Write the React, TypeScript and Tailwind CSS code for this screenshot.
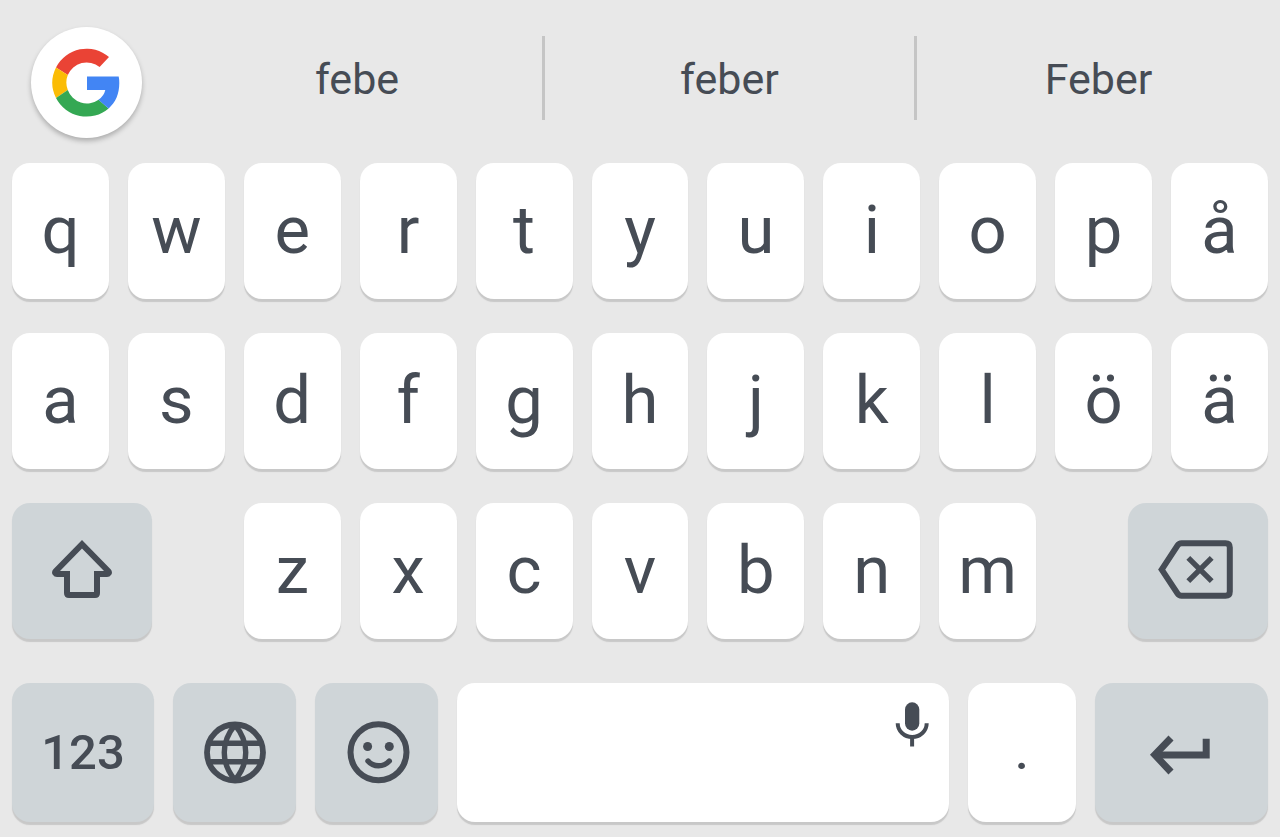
import type { ReactNode } from "react";

const topRow = ["q", "w", "e", "r", "t", "y", "u", "i", "o", "p", "å"];
const homeRow = ["a", "s", "d", "f", "g", "h", "j", "k", "l", "ö", "ä"];
const bottomRow = ["z", "x", "c", "v", "b", "n", "m"];

const keyBase =
  "flex min-w-0 items-center justify-center rounded-[18px] shadow-[0_3px_1px_#c8c8c8] ";
const lightKey = keyBase + "bg-white";
const darkKey = keyBase + "bg-[#cfd5d8]";

function LetterKey({ letter }: { letter: string }) {
  return (
    <button type="button" className={lightKey + " h-[136px] pb-0.5 text-[67px] leading-none"}>
      {letter}
    </button>
  );
}

function ActionKey({
  label,
  className,
  children,
}: {
  label: string;
  className: string;
  children: ReactNode;
}) {
  return (
    <button type="button" aria-label={label} className={darkKey + " " + className}>
      {children}
    </button>
  );
}

function GoogleLogo() {
  return (
    <svg viewBox="52 47.5 70 70" className="h-[70px] w-[70px]" aria-hidden="true">
      <path fill="#ea4335" d="M56 67A34.2 34.2 0 0 1 109 56.6L99.6 66.6A20.3 20.3 0 0 0 67.8 74.6Z" />
      <path fill="#fbbc05" d="M56 67A34.2 34.2 0 0 0 56 97.5L67.8 89.5A20.3 20.3 0 0 1 67.8 74.6Z" />
      <path fill="#34a853" d="M56 97.5A34.2 34.2 0 0 0 108.6 107.9L98.6 99.2A20.3 20.3 0 0 1 67.8 89.5Z" />
      <path fill="#4285f4" d="M87 76H118.7Q119.3 79 119.3 82.5C119.3 93.5 115.5 102.2 108.6 107.9L98.4 99.3Q104 95.5 105.3 89.5H87Z" />
    </svg>
  );
}

function ShiftIcon() {
  return (
    <svg viewBox="52 540 60 58" className="h-[58px] w-[60px]" fill="currentColor" aria-hidden="true">
      <path
        fillRule="evenodd"
        d="M82 540L110.6 569.3Q113 572 111.2 574.8Q109.8 577 107 577H100V593Q100 598 95 598H69Q64 598 64 593V577H57Q54.2 577 52.8 574.8Q51 572 53.4 569.3ZM82 548.5L60 571H70V592H94V571H104Z"
      />
    </svg>
  );
}

function BackspaceIcon() {
  return (
    <svg viewBox="1158 540 76 60" className="h-[60px] w-[76px]" fill="none" stroke="currentColor" aria-hidden="true">
      <path
        strokeWidth="6"
        d="M1161.7 569.6L1177.6 545.4Q1179 543.2 1181.5 543.2H1225.5Q1229.8 543.2 1229.8 547.5V591.5Q1229.8 595.8 1225.5 595.8H1181.5Q1179 595.8 1177.6 593.7Z"
      />
      <path strokeWidth="5.4" d="M1188.3 557.8L1211.7 581.2M1211.7 557.8L1188.3 581.2" />
    </svg>
  );
}

function GlobeIcon() {
  return (
    <svg viewBox="203 720 64 64" className="size-16" fill="none" stroke="currentColor" strokeWidth="5.4" aria-hidden="true">
      <circle cx="235" cy="751.5" r="28" strokeWidth="5.8" />
      <path d="M208.5 742.3H261.5M208.5 760.7H261.5" />
      <path strokeLinejoin="round" d="M235 724C220.7 741 220.7 762 235 779C249.3 762 249.3 741 235 724Z" />
    </svg>
  );
}

function SmileyIcon() {
  return (
    <svg viewBox="347 721 63 63" className="h-[63px] w-[63px]" fill="none" stroke="currentColor" aria-hidden="true">
      <circle cx="378.5" cy="752.3" r="28" strokeWidth="6" />
      <circle cx="367.6" cy="746.5" r="4.5" fill="currentColor" stroke="none" />
      <circle cx="389.3" cy="746.5" r="4.5" fill="currentColor" stroke="none" />
      <path strokeWidth="5.4" strokeLinecap="round" d="M368 761Q372 765.8 378.5 765.8T389.3 761" />
    </svg>
  );
}

function MicIcon() {
  return (
    <svg viewBox="895 702 34 46" className="h-[46px] w-[34px]" fill="none" stroke="currentColor" strokeWidth="4" aria-hidden="true">
      <rect x="905" y="702.3" width="14.3" height="28.4" rx="7.15" fill="currentColor" stroke="none" />
      <path d="M897.7 723.3A14.5 13.8 0 0 0 926.7 723.3" />
      <path d="M912.1 737V746.5" />
    </svg>
  );
}

function EnterIcon() {
  return (
    <svg viewBox="1149 735 65 40" className="h-10 w-[65px]" fill="none" stroke="currentColor" strokeWidth="7" aria-hidden="true">
      <path d="M1171 738L1154.8 754.8L1171 772" />
      <path d="M1156 755H1206.2V738.7" />
    </svg>
  );
}

export default function App() {
  return (
    <main className="min-h-screen bg-[#e8e8e8] pb-[15px] font-[Roboto,sans-serif] text-[#464c55]">
      <header className="flex items-start gap-[30px] pt-[27px] pb-[25px] pl-[31px]">
        <button
          type="button"
          aria-label="Google"
          className="flex size-[111px] shrink-0 items-center justify-center rounded-full bg-white shadow-[0_3px_5px_#00000040]"
        >
          <GoogleLogo />
        </button>
        <div className="mt-[9px] grid h-[84px] min-w-0 flex-1 grid-cols-[373fr_372fr_363fr] text-[43px] leading-none">
          <button type="button" className="border-r-3 border-[#c5c5c5] pt-0.5">febe</button>
          <button type="button" className="border-r-3 border-[#c5c5c5] pt-0.5">feber</button>
          <button type="button" className="pt-0.5">Feber</button>
        </div>
      </header>

      <div className="flex flex-col gap-[34px] px-3">
        <div className="grid grid-cols-11 gap-[19px]">
          {topRow.map((letter) => (
            <LetterKey key={letter} letter={letter} />
          ))}
        </div>
        <div className="grid grid-cols-11 gap-[19px]">
          {homeRow.map((letter) => (
            <LetterKey key={letter} letter={letter} />
          ))}
        </div>
        <div className="grid grid-cols-11 gap-[19px]">
          <div className="col-span-2 flex">
            <ActionKey label="Shift" className="h-[136px] w-[66%] pb-1">
              <ShiftIcon />
            </ActionKey>
          </div>
          {bottomRow.map((letter) => (
            <LetterKey key={letter} letter={letter} />
          ))}
          <div className="col-span-2 flex justify-end">
            <ActionKey label="Backspace" className="h-[136px] w-[66%] pr-1 pb-0.5">
              <BackspaceIcon />
            </ActionKey>
          </div>
        </div>
      </div>

      <div className="mt-11 grid h-[139px] grid-cols-[142fr_123fr_123fr_491fr_108fr_173fr] gap-[19px] px-3">
        <button type="button" className={darkKey + " text-[49px] leading-none font-medium"}>
          123
        </button>
        <ActionKey label="Change language" className="">
          <GlobeIcon />
        </ActionKey>
        <ActionKey label="Emoji" className="pl-1">
          <SmileyIcon />
        </ActionKey>
        <button
          type="button"
          aria-label="Space"
          className="flex min-w-0 items-start justify-end rounded-[18px] bg-white pt-[19px] pr-5 shadow-[0_3px_1px_#c8c8c8]"
        >
          <MicIcon />
        </button>
        <button type="button" className={lightKey + " text-[49px] leading-none font-medium"}>
          .
        </button>
        <ActionKey label="Enter" className="pt-1">
          <EnterIcon />
        </ActionKey>
      </div>
    </main>
  );
}
